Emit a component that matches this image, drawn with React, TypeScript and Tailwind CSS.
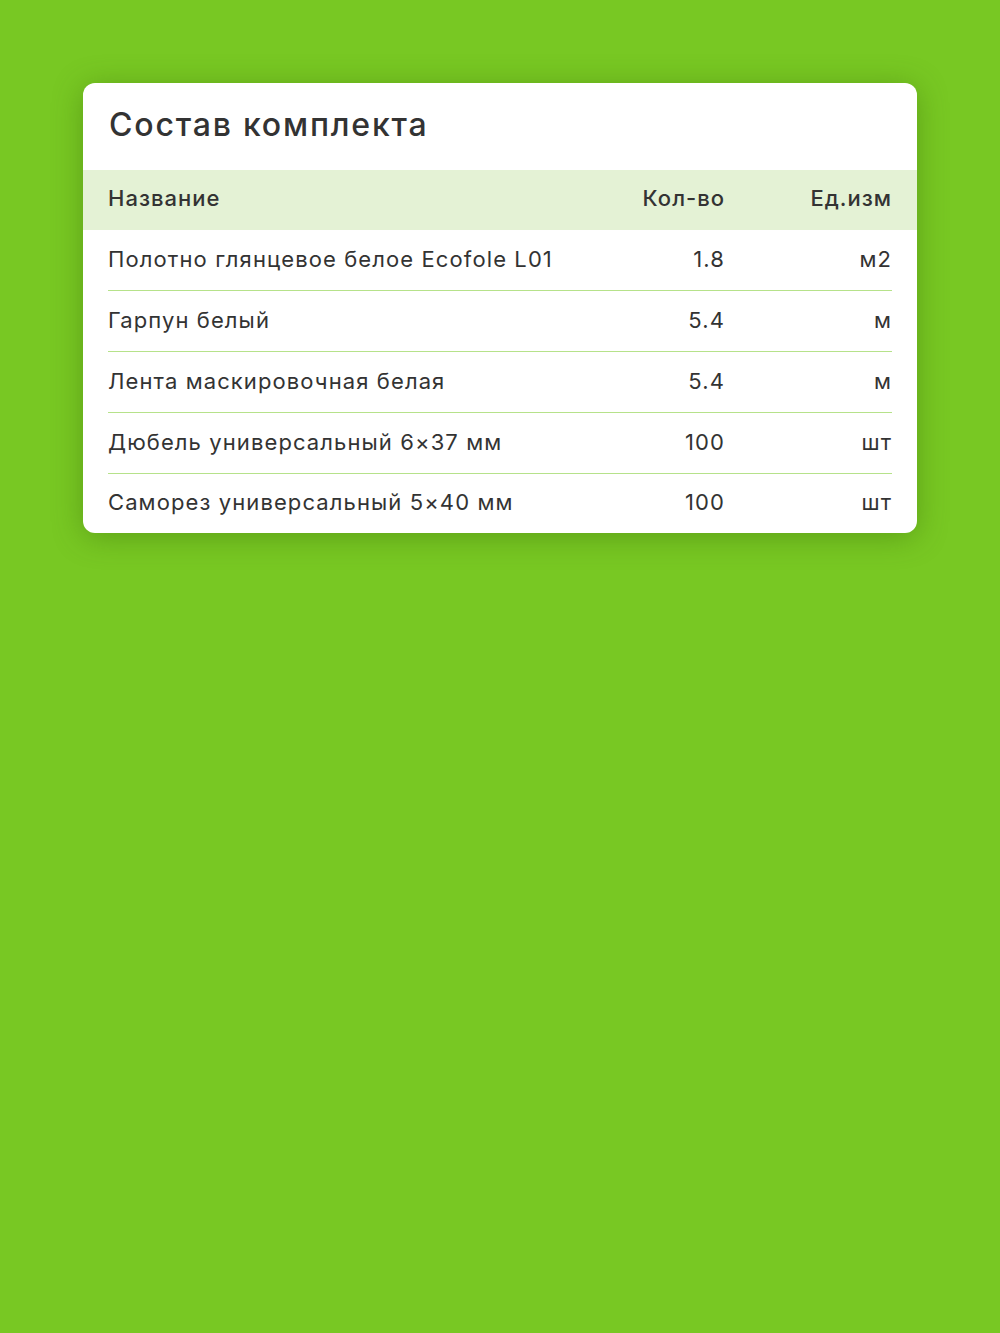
import React from "react";

const rows = [
  ["Полотно глянцевое белое Ecofole L01", "1.8", "м2"],
  ["Гарпун белый", "5.4", "м"],
  ["Лента маскировочная белая", "5.4", "м"],
  ["Дюбель универсальный 6×37 мм", "100", "шт"],
  ["Саморез универсальный 5×40 мм", "100", "шт"],
];

export default function App() {
  return (
    <div className="w-[1000px] h-[1333px] bg-[#78c823] pt-[83px] px-[83px]" style={{ fontFamily: "Inter, 'Noto Sans', sans-serif" }}>
      <div className="w-[834px] bg-white rounded-[12px] shadow-[0_4px_30px_rgba(60,110,10,0.45)] overflow-hidden text-[#333333]">
        <div className="h-[87px] px-[26px] pb-[4px] flex items-center">
          <h1 className="text-[32px] font-medium tracking-[1.8px]">Состав комплекта</h1>
        </div>
        <div className="h-[60px] bg-[#e4f2d5] pl-[25px] pr-[25px] pb-[3px] flex items-center text-[22px] font-medium tracking-[1px]">
          <div className="flex-1 whitespace-nowrap">Название</div>
          <div className="w-[120px] text-right">Кол-во</div>
          <div className="w-[167px] text-right">Ед.изм</div>
        </div>
        <div className="pl-[25px] pr-[25px]">
          {rows.map((r, i) => (
            <div key={i} className={`flex items-center text-[22px] tracking-[1.1px] pb-[2px] ${i < rows.length - 1 ? "h-[61px] border-b border-[#b6e28a]" : "h-[59px]"}`}>
              <div className="flex-1 whitespace-nowrap">{r[0]}</div>
              <div className="w-[120px] text-right">{r[1]}</div>
              <div className="w-[167px] text-right">{r[2]}</div>
            </div>
          ))}
        </div>
      </div>
    </div>
  );
}
